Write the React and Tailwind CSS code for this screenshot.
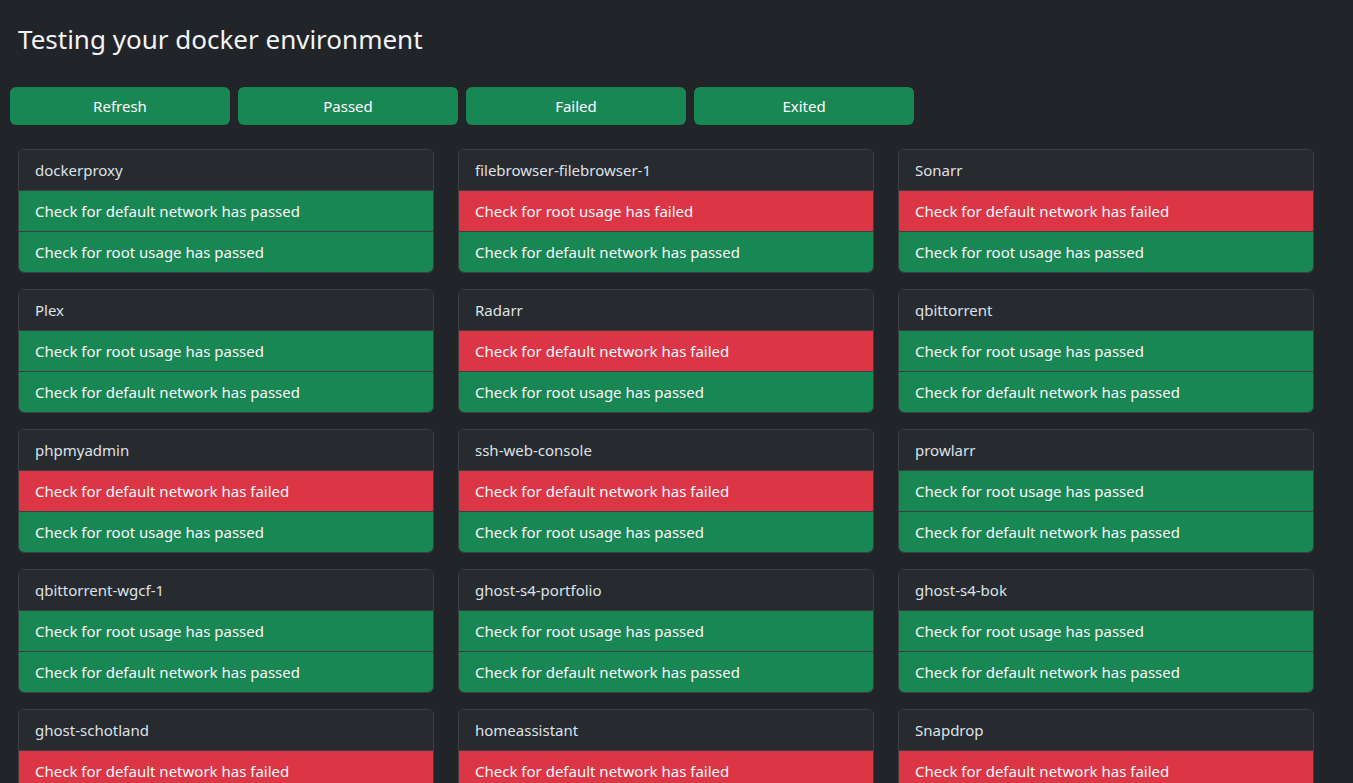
import React from "react";

const containers = [
  { name: "dockerproxy", checks: [["default network", true], ["root usage", true]] },
  { name: "filebrowser-filebrowser-1", checks: [["root usage", false], ["default network", true]] },
  { name: "Sonarr", checks: [["default network", false], ["root usage", true]] },
  { name: "Plex", checks: [["root usage", true], ["default network", true]] },
  { name: "Radarr", checks: [["default network", false], ["root usage", true]] },
  { name: "qbittorrent", checks: [["root usage", true], ["default network", true]] },
  { name: "phpmyadmin", checks: [["default network", false], ["root usage", true]] },
  { name: "ssh-web-console", checks: [["default network", false], ["root usage", true]] },
  { name: "prowlarr", checks: [["root usage", true], ["default network", true]] },
  { name: "qbittorrent-wgcf-1", checks: [["root usage", true], ["default network", true]] },
  { name: "ghost-s4-portfolio", checks: [["root usage", true], ["default network", true]] },
  { name: "ghost-s4-bok", checks: [["root usage", true], ["default network", true]] },
  { name: "ghost-schotland", checks: [["default network", false], ["root usage", true]] },
  { name: "homeassistant", checks: [["default network", false], ["root usage", true]] },
  { name: "Snapdrop", checks: [["default network", false], ["root usage", true]] },
];

const buttons = ["Refresh", "Passed", "Failed", "Exited"];

export default function App() {
  return (
    <div
      className="min-h-screen w-full bg-[#212529] text-[#dee2e6]"
      style={{ fontFamily: '"Segoe UI", "Noto Sans", sans-serif' }}
    >
      <div className="pt-[22px] px-[18px]">
        <h3 className="text-[26px] leading-[34px] font-normal text-[#f1f3f5]">
          Testing your docker environment
        </h3>
      </div>

      {/* Filters */}
      <div className="flex gap-2 px-[10px] mt-[31px]">
        {buttons.map((b) => (
          <button
            key={b}
            className="w-[220px] h-[38px] rounded-md bg-[#198754] text-white text-[15px]"
          >
            {b}
          </button>
        ))}
      </div>

      <div className="grid grid-cols-[416px_416px_416px] gap-x-6 gap-y-4 px-[18px] mt-6 pb-6">
        {containers.map((c) => (
          <div
            key={c.name}
            className="rounded-md border border-[#3b3f44] overflow-hidden bg-[#212529]"
          >
            <div className="h-10 px-4 flex items-center bg-[#272b30] text-[15px]">
              {c.name}
            </div>
            {c.checks.map(([what, ok]) => (
              <div
                key={what}
                className={`h-[41px] px-4 flex items-center border-t border-[#3b3f44] text-[15px] ${
                  ok ? "bg-[#198754]" : "bg-[#dc3545]"
                } text-[#f8f9fa]`}
              >
                Check for {what} has {ok ? "passed" : "failed"}
              </div>
            ))}
          </div>
        ))}
      </div>
    </div>
  );
}
